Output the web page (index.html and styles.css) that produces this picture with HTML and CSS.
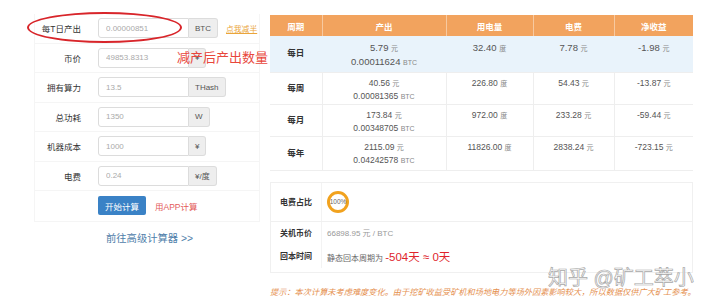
FILE: index.html
```html
<!DOCTYPE html>
<html lang="zh-CN">
<head>
  <meta charset="UTF-8">
  <title>矿机收益计算器</title>
  <link rel="stylesheet" href="styles.css">
</head>
<body>
  <div class="page">
    <!-- Left: input form -->
    <div class="left">
      <div class="form">
        <div class="row">
          <label class="lbl">每T日产出</label>
          <div class="group"><input class="inp" placeholder="0.00000851"><span class="addon">BTC</span></div>
          <a class="half" href="#">点我减半</a>
        </div>
        <div class="row">
          <label class="lbl">币价</label>
          <div class="group"><input class="inp" placeholder="49853.8313"><span class="addon">¥</span></div>
        </div>
        <div class="row">
          <label class="lbl">拥有算力</label>
          <div class="group"><input class="inp" placeholder="13.5"><span class="addon">THash</span></div>
        </div>
        <div class="row">
          <label class="lbl">总功耗</label>
          <div class="group"><input class="inp" placeholder="1350"><span class="addon">W</span></div>
        </div>
        <div class="row">
          <label class="lbl">机器成本</label>
          <div class="group"><input class="inp" placeholder="1000"><span class="addon">¥</span></div>
        </div>
        <div class="row">
          <label class="lbl">电费</label>
          <div class="group"><input class="inp" placeholder="0.24"><span class="addon">¥/度</span></div>
        </div>
        <div class="row btn-row">
          <button class="btn">开始计算</button>
          <a class="app" href="#">用APP计算</a>
        </div>
      </div>
      <a class="advanced" href="#">前往高级计算器 &gt;&gt;</a>

      <!-- annotations drawn over the form -->
      <div class="ring-mark"></div>
      <div class="note">减产后产出数量</div>
    </div>

    <!-- Right: results -->
    <div class="right">
      <table class="result">
        <colgroup>
          <col style="width:52px"><col style="width:124px"><col style="width:87px"><col style="width:81px"><col style="width:79px">
        </colgroup>
        <thead>
          <tr><th>周期</th><th>产出</th><th>用电量</th><th>电费</th><th>净收益</th></tr>
        </thead>
        <tbody>
          <tr class="today">
            <td class="period">每日</td>
            <td>5.79 <span class="unit">元</span><br>0.00011624 <span class="unit">BTC</span></td>
            <td>32.40 <span class="unit">度</span></td>
            <td>7.78 <span class="unit">元</span></td>
            <td>-1.98 <span class="unit">元</span></td>
          </tr>
          <tr>
            <td class="period">每周</td>
            <td>40.56 <span class="unit">元</span><br>0.00081365 <span class="unit">BTC</span></td>
            <td>226.80 <span class="unit">度</span></td>
            <td>54.43 <span class="unit">元</span></td>
            <td>-13.87 <span class="unit">元</span></td>
          </tr>
          <tr>
            <td class="period">每月</td>
            <td>173.84 <span class="unit">元</span><br>0.00348705 <span class="unit">BTC</span></td>
            <td>972.00 <span class="unit">度</span></td>
            <td>233.28 <span class="unit">元</span></td>
            <td>-59.44 <span class="unit">元</span></td>
          </tr>
          <tr class="last">
            <td class="period">每年</td>
            <td>2115.09 <span class="unit">元</span><br>0.04242578 <span class="unit">BTC</span></td>
            <td>11826.00 <span class="unit">度</span></td>
            <td>2838.24 <span class="unit">元</span></td>
            <td>-723.15 <span class="unit">元</span></td>
          </tr>
        </tbody>
      </table>

      <div class="summary">
        <div class="sum-row ratio">
          <div class="sum-lbl">电费占比</div>
          <div class="sum-val"><span class="circle">100%</span></div>
        </div>
        <div class="sum-block">
          <div class="sum-row">
            <div class="sum-lbl">关机币价</div>
            <div class="sum-val grey">66898.95 元 / BTC</div>
          </div>
          <div class="sum-row">
            <div class="sum-lbl">回本时间</div>
            <div class="sum-val">静态回本周期为 <span class="payback">-504天 ≈ 0天</span></div>
          </div>
        </div>
      </div>

      <p class="tip">提示：本次计算未考虑难度变化。由于挖矿收益受矿机和场地电力等场外因素影响较大，所以数据仅供广大矿工参考。</p>
    </div>

    <div class="watermark">知乎 @矿工萃小</div>
  </div>
</body>
</html>
```

FILE: styles.css
```css
/* Plain white page, small downscaled type */
body {
  margin: 0;
  background: #fff;
  font-family: "Liberation Sans", "Noto Sans CJK SC", sans-serif;
  color: #333;
}
.page {
  position: relative;
  width: 720px;
  height: 304px;
  display: flex;
  overflow: hidden;
}

/* Left form */
.left {
  position: relative;
  width: 270px;
  padding-top: 14px;
}
.form {
  margin-left: 34px;
  width: 224px;
  border: 1px solid #f5f5f5;
  border-top: none;
}
.row {
  display: flex;
  align-items: center;
  height: 29.5px;
  border-bottom: 1px solid #f5f5f5;
  box-sizing: border-box;
}
.lbl {
  width: 46px;
  text-align: right;
  font-size: 8.5px;
  color: #333;
  margin-right: 17px;
  white-space: nowrap;
}
.group {
  display: flex;
  height: 20px;
}
.inp {
  width: 91px;
  height: 20px;
  box-sizing: border-box;
  border: 1px solid #dcdcdc;
  border-radius: 3px 0 0 3px;
  padding: 0 0 0 7px;
  font-family: inherit;
  font-size: 8px;
  outline: none;
}
.inp::placeholder {
  color: #aaa;
}
.addon {
  display: flex;
  align-items: center;
  padding: 0 6px;
  height: 20px;
  box-sizing: border-box;
  background: #eee;
  border: 1px solid #dcdcdc;
  border-left: none;
  border-radius: 0 3px 3px 0;
  font-size: 8px;
  color: #555;
}
.half {
  margin-left: 8px;
  font-size: 7.8px;
  color: #eaa53a;
  text-decoration: underline;
}
.btn-row {
  padding-left: 63px;
  border-bottom: none;
}
.btn {
  width: 48px;
  height: 19px;
  border: none;
  border-radius: 2px;
  background: #3a82c6;
  color: #fff;
  font-family: inherit;
  font-size: 8.5px;
  padding: 0;
}
.app {
  margin-left: 9px;
  font-size: 8.5px;
  color: #e35a5a;
  text-decoration: none;
}
.advanced {
  display: block;
  margin: 8px 0 0 106px;
  font-size: 10.3px;
  color: #4f80aa;
  text-decoration: none;
}
.ring-mark {
  position: absolute;
  left: 27px;
  top: 12px;
  width: 155px;
  height: 31px;
  box-sizing: border-box;
  border: 2px solid #d8252a;
  border-radius: 50%;
}
.note {
  position: absolute;
  left: 177px;
  top: 47px;
  font-size: 13px;
  color: #e8473c;
  white-space: nowrap;
}

/* Right results */
.right {
  width: 423px;
  padding-top: 15px;
}
.result {
  width: 423px;
  table-layout: fixed;
  border-collapse: collapse;
  font-size: 8.5px;
  color: #555;
}
.result th {
  height: 21px;
  padding: 0;
  background: #f2a35e;
  color: #fff;
  font-weight: bold;
  border-left: 1px solid #f7c9a0;
}
.result th:first-child {
  border-left: none;
}
.result td {
  height: 32px;
  padding: 4px 0 0;
  box-sizing: border-box;
  text-align: center;
  vertical-align: top;
  line-height: 12px;
  border-left: 1px solid #eee;
  border-bottom: 1px solid #eee;
}
.result td:first-child {
  border-left: none;
}
.result td.period {
  vertical-align: middle;
  padding: 0;
  font-weight: bold;
  color: #333;
}
.result .today td {
  height: 36px;
  padding-top: 5px;
  line-height: 13px;
  font-size: 9.5px;
  background: #e9f3fb;
  border-left-color: #e9f3fb;
}
.result .today td.period {
  padding: 0;
  font-size: 8.5px;
}
.result .last td {
  height: 34px;
}
.unit {
  font-size: 7px;
  color: #888;
}

.summary {
  margin-top: 11px;
  border: 1px solid #f0f0f0;
  width: 421px;
}
.sum-row {
  display: flex;
  align-items: center;
}
.ratio {
  height: 38px;
  border-bottom: 1px solid #f0f0f0;
}
.sum-block {
  padding: 0 0 4px;
}
.sum-block .sum-row {
  height: 22px;
}
.sum-block .sum-row + .sum-row {
  height: 24px;
}
.sum-lbl {
  width: 50px;
  text-align: center;
  font-size: 8px;
  font-weight: bold;
  color: #333;
  align-self: stretch;
  display: flex;
  align-items: center;
  justify-content: center;
  border-right: 1px solid #f3f3f3;
}
.sum-val {
  padding-left: 5px;
  font-size: 8px;
  color: #666;
}
.grey {
  color: #999;
}
.circle {
  display: flex;
  align-items: center;
  justify-content: center;
  width: 22px;
  height: 22px;
  box-sizing: border-box;
  border: 3px solid #f1a21e;
  border-radius: 50%;
  font-size: 6.5px;
  color: #666;
}
.payback {
  font-size: 11.5px;
  color: #e0242c;
}
.tip {
  margin: 12px 0 0;
  font-size: 8.2px;
  font-style: italic;
  color: #e5904f;
  white-space: nowrap;
}

.watermark {
  position: absolute;
  left: 548px;
  top: 262px;
  font-size: 20px;
  color: rgba(255, 255, 255, 0.75);
  -webkit-text-stroke: 0.7px #a8a8a8;
  white-space: nowrap;
}
```
